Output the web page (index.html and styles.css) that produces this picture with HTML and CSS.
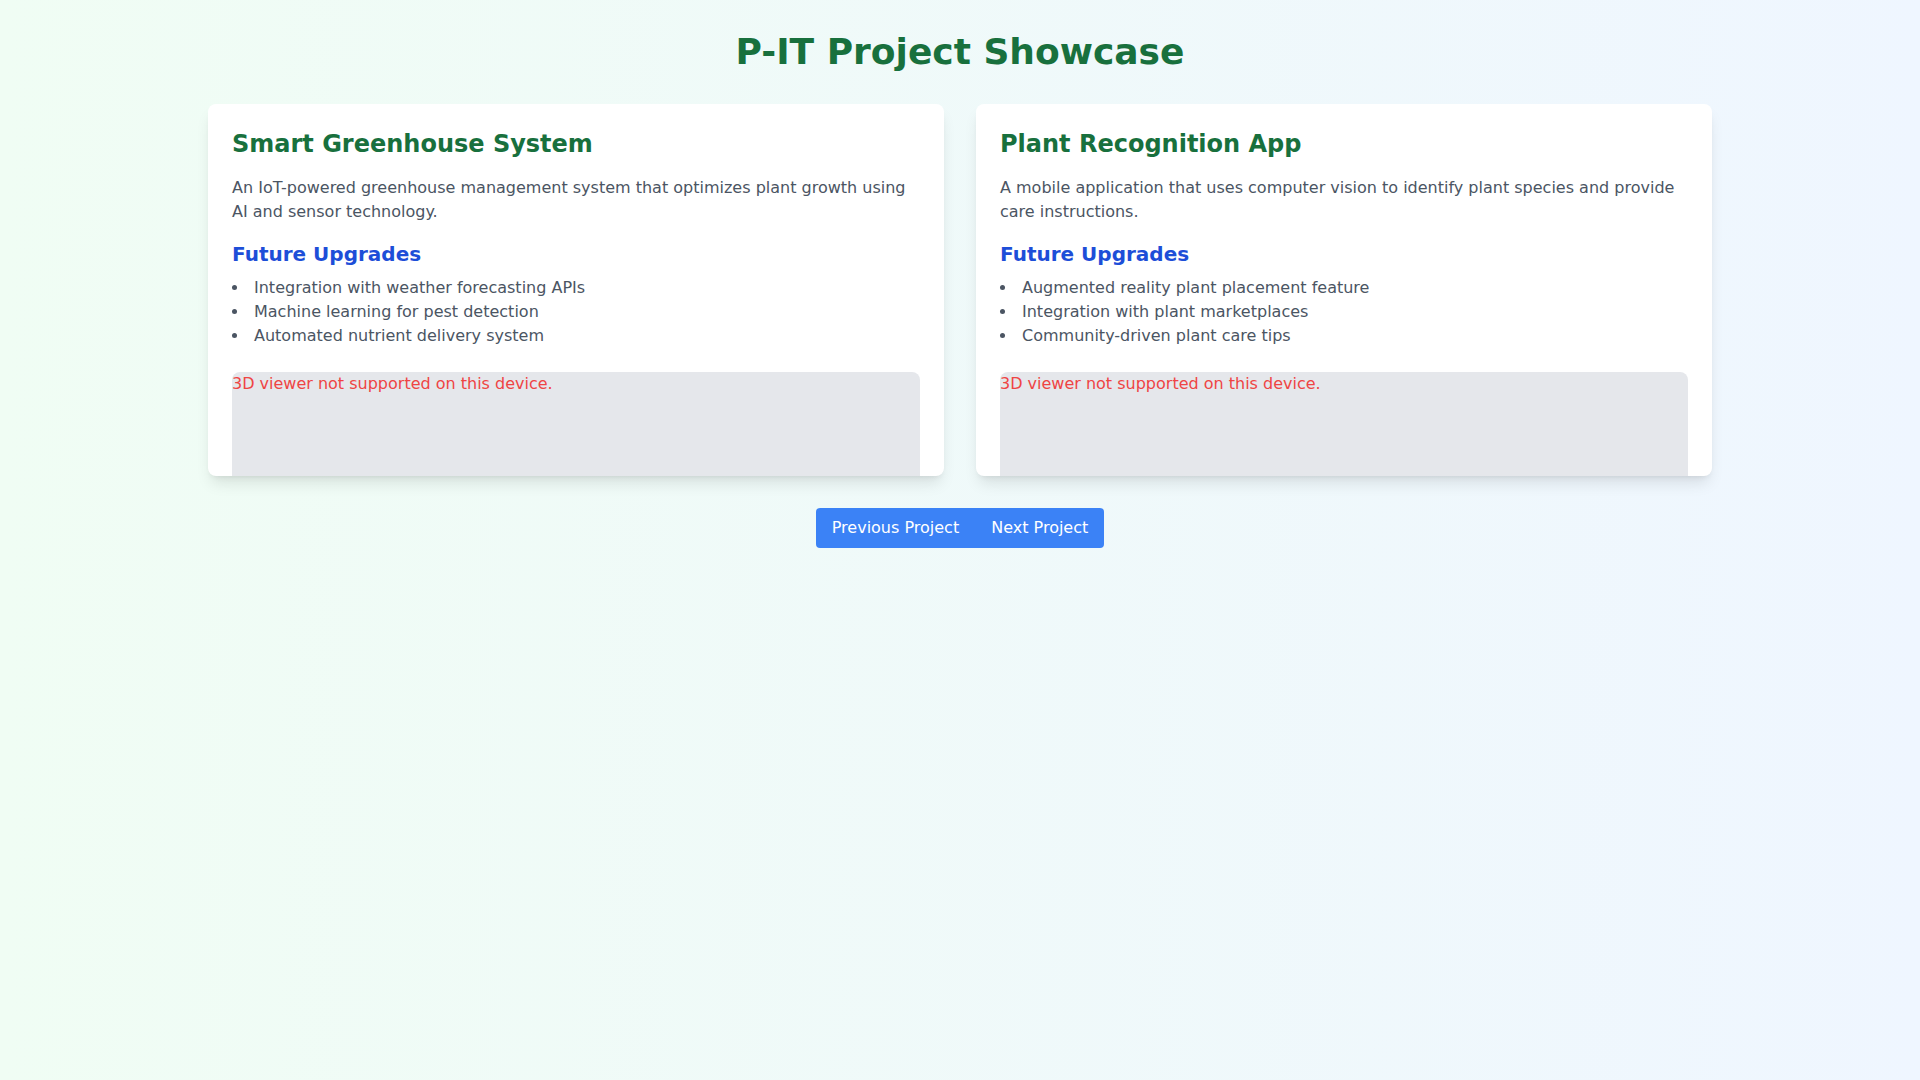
FILE: index.html
```html
<!DOCTYPE html>
<html lang="en">
<head>
<meta charset="utf-8">
<title>P-IT Project Showcase</title>
<link rel="stylesheet" href="styles.css">
</head>
<body>
<div class="page">
  <div class="container">
    <h1 class="page-title">P-IT Project Showcase</h1>
    <div class="grid">
      <div class="card">
        <h2 class="card-title">Smart Greenhouse System</h2>
        <p class="card-desc">An IoT-powered greenhouse management system that optimizes plant growth using AI and sensor technology.</p>
        <h3 class="upgrades-title">Future Upgrades</h3>
        <ul class="upgrades">
          <li>Integration with weather forecasting APIs</li>
          <li>Machine learning for pest detection</li>
          <li>Automated nutrient delivery system</li>
        </ul>
        <div class="viewer"><p class="viewer-msg">3D viewer not supported on this device.</p></div>
      </div>
      <div class="card">
        <h2 class="card-title">Plant Recognition App</h2>
        <p class="card-desc">A mobile application that uses computer vision to identify plant species and provide care instructions.</p>
        <h3 class="upgrades-title">Future Upgrades</h3>
        <ul class="upgrades">
          <li>Augmented reality plant placement feature</li>
          <li>Integration with plant marketplaces</li>
          <li>Community-driven plant care tips</li>
        </ul>
        <div class="viewer"><p class="viewer-msg">3D viewer not supported on this device.</p></div>
      </div>
    </div>
    <div class="nav">
      <div class="nav-group">
        <button class="nav-btn">Previous Project</button>
        <button class="nav-btn">Next Project</button>
      </div>
    </div>
  </div>
</div>
</body>
</html>
```
FILE: styles.css
```css
* { box-sizing: border-box; }
html, body { margin: 0; padding: 0; }
body {
  font-family: "DejaVu Sans", sans-serif;
  font-size: 16px;
  line-height: 24px;
  min-height: 1080px;
  background: linear-gradient(to right, #f0fdf4, #eff6ff);
}
.page { padding: 32px 0; }
.container {
  max-width: 1536px;
  margin: 0 auto;
  padding: 0 16px;
}
.page-title {
  margin: 0 0 32px;
  text-align: center;
  font-size: 36px;
  line-height: 40px;
  font-weight: 700;
  color: #18703d;
}
.grid {
  display: grid;
  grid-template-columns: 1fr 1fr;
  gap: 32px;
}
.card {
  background: #fff;
  border-radius: 8px;
  padding: 24px 24px 0;
  height: 372px;
  overflow: hidden;
  box-shadow: 0 10px 15px -3px rgba(0,0,0,0.1), 0 4px 6px -4px rgba(0,0,0,0.1);
}
.card-title {
  margin: 0 0 16px;
  font-size: 24px;
  line-height: 32px;
  font-weight: 700;
  color: #18703d;
}
.card-desc {
  margin: 0 0 16px;
  color: #4b5563;
}
.upgrades-title {
  margin: 0 0 8px;
  font-size: 20px;
  line-height: 28px;
  font-weight: 700;
  color: #1d4ed8;
}
.upgrades {
  margin: 0 0 24px;
  padding: 0;
  list-style: disc inside;
  color: #4b5563;
}
.viewer {
  height: 256px;
  background: #e5e7eb;
  border-radius: 8px;
}
.viewer-msg {
  margin: 0;
  color: #ef4444;
}
.nav {
  margin-top: 32px;
  display: flex;
  justify-content: center;
}
.nav-group {
  display: flex;
  border-radius: 4px;
  overflow: hidden;
}
.nav-btn {
  font-family: "DejaVu Sans", sans-serif;
  font-size: 16px;
  line-height: 24px;
  padding: 8px 16px;
  border: 0;
  margin: 0;
  background: #3b82f6;
  color: #fff;
}
```
